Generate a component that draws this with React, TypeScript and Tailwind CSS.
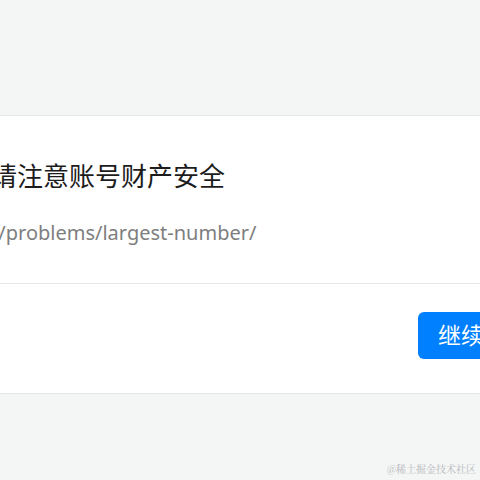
import React from 'react';

const LeavePage = () => {
  return (
    <div className="w-[480px] h-[480px] overflow-hidden bg-[#f4f5f5] flex flex-col" style={{ fontFamily: '"Noto Sans", "Noto Sans CJK SC", sans-serif' }}>
      <div className="h-[115px] shrink-0" />

      {/* card, wider than the window so both sides are cut */}
      <div className="ml-[-300px] w-[1000px] bg-white border-y border-[#e4e6eb] shrink-0">
        <div className="pt-[40px] pb-[34px] pl-[57px] border-b border-[#e4e6eb]">
          <div className="text-[26px] leading-[40px] text-[#1c1c1c] whitespace-nowrap">即将离开稀土掘金，请注意账号财产安全</div>
          <div className="mt-[21px] ml-[18px] text-[20px] leading-[32px] text-[#7e7e7e] whitespace-nowrap">https://leetcode-cn.com/problems/largest-number/</div>
        </div>
        <div className="flex pt-[28px] pb-[34px] pl-[718px]">
          <button className="h-[47px] px-[20px] rounded-[6px] bg-[#0080ff] text-white text-[23px] whitespace-nowrap">继续访问</button>
        </div>
      </div>

      <div className="flex-1 flex items-end justify-end pr-[4px] pb-[5px]">
        <span className="text-[10px] leading-[12px] text-[#b6b8ba]" style={{ fontFamily: '"Noto Serif CJK SC", "Noto Sans CJK SC", serif' }}>@稀土掘金技术社区</span>
      </div>
    </div>
  );
};

export default function App() {
  return <LeavePage />;
}
